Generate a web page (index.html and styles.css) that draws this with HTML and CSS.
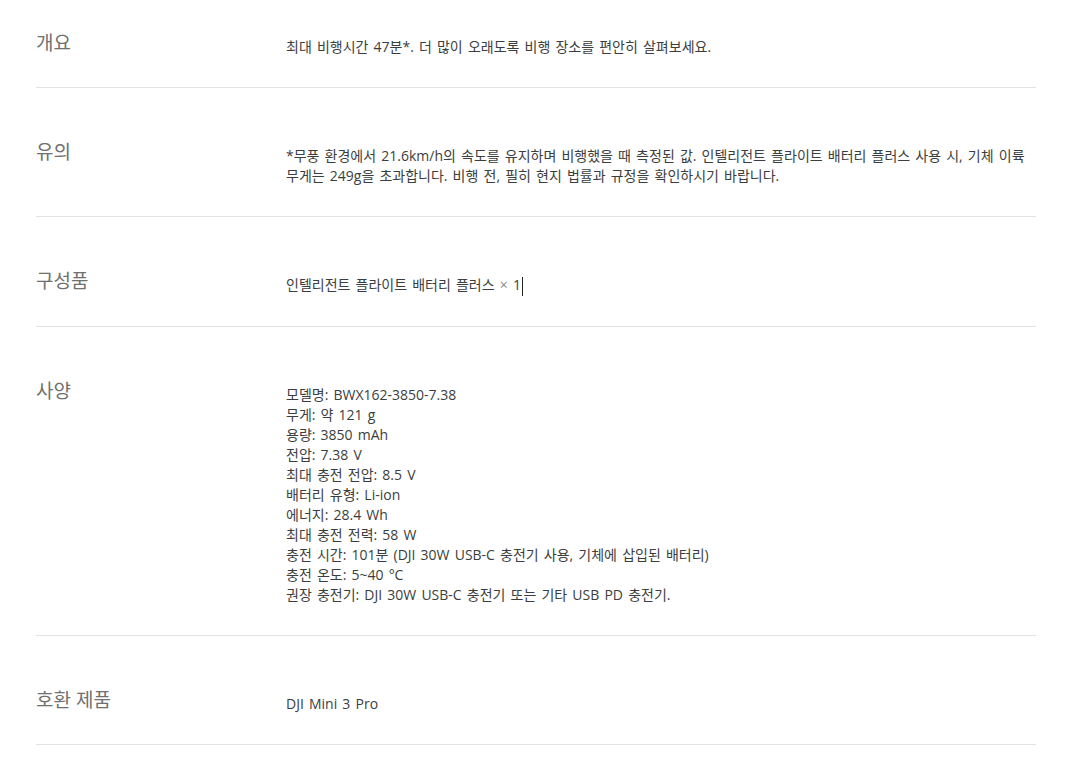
FILE: index.html
```html
<!DOCTYPE html>
<html lang="ko">
<head>
<meta charset="utf-8">
<link rel="stylesheet" href="styles.css">
</head>
<body>
<div class="specs">
  <div class="row first">
    <div class="label">개요</div>
    <div class="content">최대 비행시간 47분*. 더 많이 오래도록 비행 장소를 편안히 살펴보세요.</div>
  </div>
  <div class="row">
    <div class="label">유의</div>
    <div class="content">*무풍 환경에서 21.6km/h의 속도를 유지하며 비행했을 때 측정된 값. 인텔리전트 플라이트 배터리 플러스 사용 시, 기체 이륙 무게는 249g을 초과합니다. 비행 전, 필히 현지 법률과 규정을 확인하시기 바랍니다.</div>
  </div>
  <div class="row">
    <div class="label">구성품</div>
    <div class="content">인텔리전트 플라이트 배터리 플러스 <span class="times">×</span> 1<span class="caret"></span></div>
  </div>
  <div class="row">
    <div class="label">사양</div>
    <div class="content">
      <div>모델명: BWX162-3850-7.38</div>
      <div>무게: 약 121 g</div>
      <div>용량: 3850 mAh</div>
      <div>전압: 7.38 V</div>
      <div>최대 충전 전압: 8.5 V</div>
      <div>배터리 유형: Li-ion</div>
      <div>에너지: 28.4 Wh</div>
      <div>최대 충전 전력: 58 W</div>
      <div>충전 시간: 101분 (DJI 30W USB-C 충전기 사용, 기체에 삽입된 배터리)</div>
      <div>충전 온도: 5~40 °C</div>
      <div>권장 충전기: DJI 30W USB-C 충전기 또는 기타 USB PD 충전기.</div>
    </div>
  </div>
  <div class="row">
    <div class="label">호환 제품</div>
    <div class="content">DJI Mini 3 Pro</div>
  </div>
</div>
</body>
</html>
```
FILE: styles.css
```css
html, body {
  margin: 0;
  padding: 0;
  background: #ffffff;
}
body {
  font-family: "Open Sans", "Noto Sans CJK KR", sans-serif;
  color: #3b3e40;
}
.specs {
  width: 1000px;
  margin-left: 36px;
}
.row {
  display: grid;
  grid-template-columns: 250px 1fr;
  padding: 54px 0 30px;
  border-bottom: 1px solid #e3e3e3;
}
.row.first {
  padding-top: 33px;
}
.label {
  font-size: 19px;
  line-height: 20px;
  color: #707070;
  font-weight: 400;
}
.content {
  font-size: 14px;
  line-height: 20px;
  word-spacing: 1.5px;
  word-break: keep-all;
  padding-top: 4px;
  color: #3b3e40;
}
.times {
  color: #8a8a8a;
}
.caret {
  display: inline-block;
  width: 1px;
  height: 19px;
  background: #222;
  vertical-align: -6px;
  margin-left: 1px;
}
```
